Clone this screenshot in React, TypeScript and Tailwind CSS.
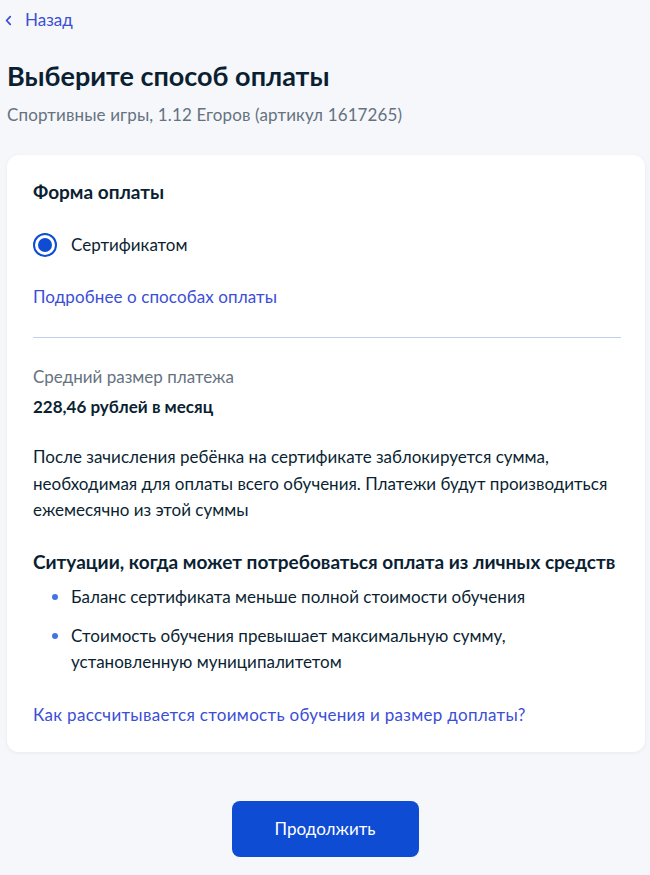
const font = { fontFamily: 'Lato, "Noto Sans", sans-serif' }

export default function App() {
  return (
    <div className="min-h-[875px] bg-[#f5f7fa] text-[#0b1f33]" style={font}>
      {/* Back link */}
      <div className="flex items-center gap-[13px] pl-[5px] pt-[9px] text-[17px] leading-[22px] text-[#3b4ed6]">
        <svg viewBox="0 0 8 12" className="h-[11px] w-[7px]" fill="none" stroke="currentColor" strokeWidth="2" strokeLinecap="round" strokeLinejoin="round">
          <path d="M6 1.5 1.8 6 6 10.5" />
        </svg>
        <span>Назад</span>
      </div>

      <div className="pl-[7px] pr-[5px]">
        {/* Header */}
        <h1 className="mt-[28px] text-[27px] font-bold leading-[34px]">Выберите способ оплаты</h1>
        <p className="mt-[10px] text-[17px] leading-[24px] tracking-[0.13px] text-[#66727f]">
          Спортивные игры, 1.12 Егоров (артикул 1617265)
        </p>

        {/* Card */}
        <div className="mt-[28px] rounded-[12px] bg-white pb-[25px] pl-[26px] pr-[24px] pt-[24px] shadow-[0_1px_4px_rgba(11,31,51,0.06)]">
          <h2 className="text-[19px] font-bold leading-[26px]">Форма оплаты</h2>

          <label className="mt-[28px] flex items-center gap-[14px]">
            <span className="flex h-[24px] w-[24px] items-center justify-center rounded-full border-[2px] border-[#0d4cd3]">
              <span className="h-[14px] w-[14px] rounded-full bg-[#0d4cd3]" />
            </span>
            <span className="text-[17px] leading-[24px]">Сертификатом</span>
          </label>

          <a className="mt-[28px] block text-[17px] leading-[24px] tracking-[0.1px] text-[#3b4ed6]">
            Подробнее о способах оплаты
          </a>

          <div className="mt-[28px] h-px bg-[#c2cff0]" />

          <p className="mt-[27px] text-[17px] leading-[24px] text-[#66727f]">Средний размер платежа</p>
          <p className="mt-[6px] text-[17px] font-bold leading-[24px]">228,46 рублей в месяц</p>

          <p className="mt-[25px] text-[17px] leading-[26.5px]">
            После зачисления ребёнка на сертификате заблокируется сумма, необходимая для оплаты всего
            обучения. Платежи будут производиться ежемесячно из этой суммы
          </p>

          <h3 className="mt-[24px] whitespace-nowrap text-[19px] font-bold leading-[28px]">
            Ситуации, когда может потребоваться оплата из личных средств
          </h3>
          <ul className="mt-[8px] flex flex-col gap-[13px] text-[17px] leading-[26px]">
            <li className="flex gap-[13px] pl-[19px]">
              <span className="mt-[10px] h-[6px] w-[6px] shrink-0 rounded-full bg-[#4274e3]" />
              <span>Баланс сертификата меньше полной стоимости обучения</span>
            </li>
            <li className="flex gap-[13px] pl-[19px]">
              <span className="mt-[10px] h-[6px] w-[6px] shrink-0 rounded-full bg-[#4274e3]" />
              <span>Стоимость обучения превышает максимальную сумму, установленную муниципалитетом</span>
            </li>
          </ul>

          <a className="mt-[28px] block text-[17px] leading-[24px] tracking-[0.3px] text-[#3b4ed6]">
            Как рассчитывается стоимость обучения и размер доплаты?
          </a>
        </div>

        {/* Continue */}
        <div className="mt-[49px] flex justify-center pr-[2px]">
          <button className="h-[56px] w-[187px] rounded-[8px] bg-[#0d4cd3] text-[17px] text-white">
            Продолжить
          </button>
        </div>
      </div>
    </div>
  )
}
